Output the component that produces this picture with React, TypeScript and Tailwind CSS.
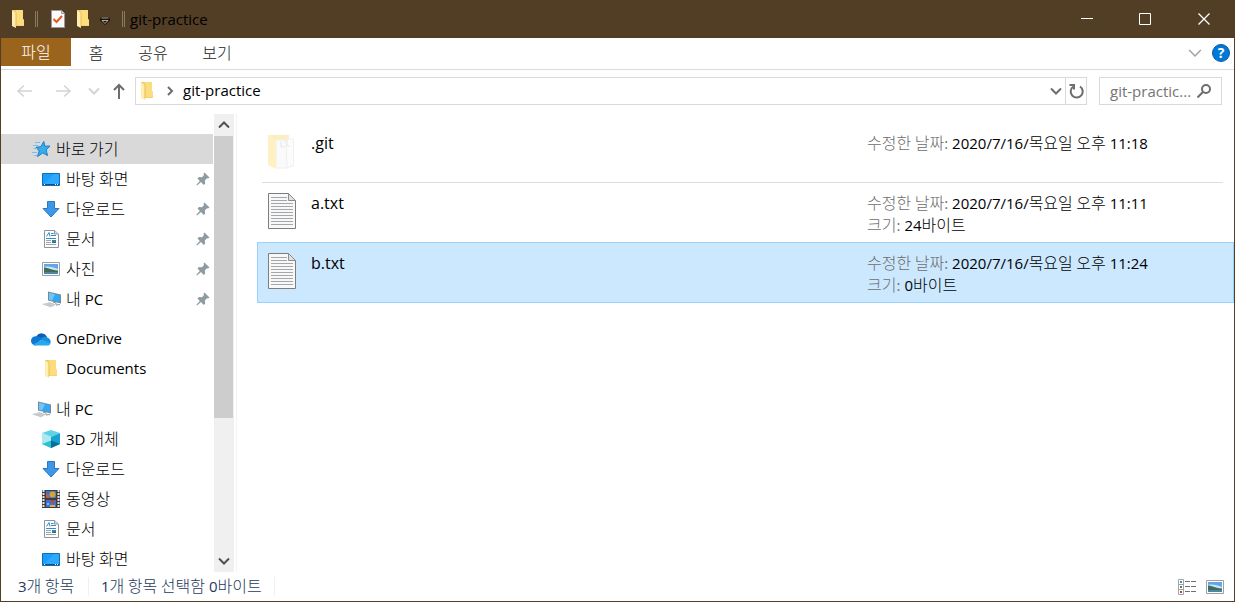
import React from 'react';
import clsx from 'clsx';

type IconProps = { className?: string };

const HANGUL = /([\u3131-\uD79D]+(?: [\u3131-\uD79D]+)*)/;

// Hangul runs are set a step larger than the latin around them
const Txt: React.FC<{ children: string }> = ({ children }) => (
  <>
    {children.split(HANGUL).map((part, i) =>
      i % 2 === 1 ? (
        <span key={i} className="font-['Noto_Sans_CJK_KR',sans-serif] text-[16px] font-light">{part}</span>
      ) : (
        part
      )
    )}
  </>
);

const FolderIcon: React.FC<IconProps> = ({ className = 'w-[14px] h-[18px]' }) => (
  <svg viewBox="0 0 14 18" className={className} aria-hidden="true">
    <path d="M1 0h11v9l1 1v6H3L1 16z" fill="#f2cb62" />
    <path d="M5 0h7v9l1 1V15.500H5z" fill="#fbdc7f" />
    <path d="M1 .5l4 2.500V18L1 16z" fill="#ffeeb0" />
    <path d="M4.500 3L5.500 2.500v13l-1 2z" fill="#e8bd52" />
  </svg>
);

const CheckPageIcon = () => (
  <svg viewBox="0 0 16 18" className="w-4 h-[18px]" aria-hidden="true">
    <path d="M1.500 .5h10L14.500 3.500v14h-13z" fill="#fbfbfb" stroke="#9a9a9a" />
    <path d="M11.500 .5v3h3" fill="#d5dde2" stroke="#9a9a9a" />
    <path d="M3.500 9l3 3L12 6" fill="none" stroke="#e8571c" strokeWidth="2" />
  </svg>
);

const Chevron: React.FC<IconProps & { dir: 'down' | 'up' | 'right'; thick?: number }> = ({ className, dir, thick = 2 }) => {
  const paths = { down: 'M1 3.500l5 5 5-5', up: 'M1 8.500l5-5 5 5', right: 'M4 2l4 4-4 4' };
  return (
    <svg viewBox="0 0 12 12" className={clsx('w-3 h-3', className)} fill="none" stroke="currentColor" strokeWidth={thick} aria-hidden="true">
      <path d={paths[dir]} />
    </svg>
  );
};

const Arrow: React.FC<{ className?: string; d: string }> = ({ className, d }) => (
  <svg viewBox="0 0 16 16" className={clsx('w-4 h-4', className)} fill="none" stroke="currentColor" strokeWidth="1.6" aria-hidden="true">
    <path d={d} />
  </svg>
);

const StarIcon = () => (
  <svg viewBox="0 0 20 18" className="w-5 h-[18px]" aria-hidden="true">
    <path d="M12.800 1.500l1 4.700 5.200-.2-3.800 3.900 1.300 5.600-4.700-2.600-5.300 3.600 1.700-5.600-3.200-3.600 4.800-.6z" fill="#35aef0" stroke="#1b7cc4" />
    <path d="M4 2.500h5M2 5.500h5M2.500 8.500h3M1 12.500h5M3 15.500h3" stroke="#7cbce8" />
  </svg>
);

const DesktopIcon = () => (
  <svg viewBox="0 0 20 18" className="w-5 h-[18px]" aria-hidden="true">
    <path d="M1.500 3.500h17v12h-17z" fill="#1b9dfb" stroke="#0e6fb5" />
    <path d="M2 15L13 4h5v11z" fill="#3fb0ff" opacity=".6" />
    <path d="M2 14.500h16" stroke="#0a4f86" />
    <path d="M3 14.500h1M14 14.500h1M16 14.500h1" stroke="#fff" />
  </svg>
);

const DownloadIcon = () => (
  <svg viewBox="0 0 20 18" className="w-5 h-[18px]" aria-hidden="true">
    <path d="M6.500 1.500h7v7h4.500L10 17 2 8.500h4.500z" fill="#3c98e6" stroke="#2a78c2" />
  </svg>
);

const DocumentIcon = () => (
  <svg viewBox="0 0 20 18" className="w-5 h-[18px]" aria-hidden="true">
    <path d="M3.500 .5h10L17.500 4v13.500h-14z" fill="#fdfdfd" stroke="#8e9396" />
    <path d="M13.500 .5V4H17" fill="#dfe3e5" stroke="#8e9396" />
    <path d="M5.500 6.500l2.500-4 1 4M10 3.500h2.500M10 5.500h5M5 8.500h10" stroke="#2b8fd0" fill="none" />
    <path d="M5 10.500h5M5 12.500h5M5 14.500h10" stroke="#9aa4ab" />
    <path d="M11 10h4v3h-4z" fill="#3d7fb0" />
    <path d="M11 12h4v1h-4z" fill="#3d6b50" />
  </svg>
);

const PictureIcon: React.FC<IconProps> = ({ className = 'w-5 h-[18px]' }) => (
  <svg viewBox="0 0 20 18" className={className} aria-hidden="true">
    <path d="M1.500 2.500h17v13h-17z" fill="#fff" stroke="#9aa0a3" />
    <path d="M3 4h14v10H3z" fill="#63a5e6" />
    <path d="M3 7c4-1 9 0 14 2v2H3z" fill="#cfe5f4" />
    <path d="M3 7.500c4 0 6 2.500 14 3V12H3z" fill="#3f6e58" />
    <path d="M3 12h14v2H3z" fill="#4f86a8" />
  </svg>
);

const PcIcon = () => (
  <svg viewBox="0 0 20 18" className="w-5 h-[18px]" aria-hidden="true">
    <path d="M7 1.500l13 3v9L7 10.500z" fill="#7a8791" />
    <path d="M8 2.800l11 2.500v7L8 9.700z" fill="#32a8f5" />
    <path d="M8 2.800l6 1.400-3 6.200-3-.7z" fill="#6ec4fb" />
    <path d="M12 12l3 1v2l4-.500" fill="none" stroke="#8c98a1" />
    <path d="M1 14l8-2 6 2.500-5 3z" fill="#d4dade" />
    <path d="M2 14.200l8 2.300M4.500 13.500l8 2.300M7 12.800l7 2" stroke="#a9b2b9" strokeWidth=".5" />
  </svg>
);

const CloudIcon = () => (
  <svg viewBox="0 0 20 18" className="w-5 h-[18px]" aria-hidden="true">
    <path d="M5.500 6A6 6 0 0 1 16 7l-5 4-6-3z" fill="#0a5fb4" />
    <path d="M4 15.500A4.700 4.700 0 0 1 5.500 6.200c2-.3 4 .8 5.500 2l-6 7z" fill="#0f78d4" />
    <path d="M10 8.500c2-2 5-2 6.500-1a4.500 4.500 0 0 1 2.800 6L12 12z" fill="#1490df" />
    <path d="M2 14.500l9-5 8.500 4c-.5 1.500-1.800 2-3.500 2H4.500C3.500 15.500 2.700 15.200 2 14.500z" fill="#28a8ea" />
  </svg>
);

const CubeIcon = () => (
  <svg viewBox="0 0 20 18" className="w-5 h-[18px]" aria-hidden="true">
    <path d="M10 0l9 3-9 4-9-4z" fill="#5fd3e3" />
    <path d="M1 3l9 4v11l-9-4z" fill="#aee9f0" />
    <path d="M19 3l-9 4v11l9-4z" fill="#14a3d2" />
    <path d="M1 14l9-3.500V18z" fill="#2fc1cf" />
    <path d="M10 10.500l9 3.500-9 4z" fill="#0a6f93" />
  </svg>
);

const VideoIcon = () => (
  <svg viewBox="0 0 20 18" className="w-5 h-[18px]" aria-hidden="true">
    <path d="M1 0h18v18H1z" fill="#3d3d3d" />
    <path d="M2.500 0v18M17.500 0v18" stroke="#e4e4e4" strokeWidth="2" strokeDasharray="2 1" />
    <path d="M5 1h10v7H5zM5 10h10v7H5z" fill="#3b74d6" />
    <circle cx="11.500" cy="4.500" r="3" fill="#d6a52a" />
    <path d="M5 4l3 1v3H5z" fill="#d2573c" />
    <path d="M9 10h5l-2.500 4z" fill="#c9402d" />
    <path d="M9 15h5v2H9z" fill="#e0b52f" />
    <path d="M6 13h2v2H6z" fill="#8fb8f2" />
  </svg>
);

const PinIcon = () => (
  <svg viewBox="0 0 14 14" className="w-[14px] h-[14px]" aria-hidden="true">
    <path d="M8.500 .5l5 5-1.500 1-1-.2-2.200 2.200.4 3-1.500 1.500-2.700-2.900L1 13.500l-.7-.7L3.800 9 1.500 6.500 3 5l3 .3L8 3l-.5-1.200z" fill="#8f9ba3" />
  </svg>
);

const OpenFolderIcon = () => (
  <svg viewBox="0 0 30 36" className="w-[30px] h-9" aria-hidden="true">
    <path d="M1 2h21v6H9v25z" fill="#fdeec0" />
    <path d="M9 7h7l5 3v25H9z" fill="#fafafa" stroke="#f0f0f0" />
    <path d="M19 6h7.500v27L20 34.500z" fill="#fcfcfc" stroke="#f0f0f0" />
    <path d="M14 8v6h4M20 6v7h3" fill="none" stroke="#e8e8e8" />
    <path d="M1 2l8 5v29l-8-4z" fill="#fff1c4" />
  </svg>
);

const TextFileIcon = () => (
  <svg viewBox="0 0 30 36" className="w-[30px] h-9" aria-hidden="true">
    <path d="M1.500 .5h20l7 7v28h-27z" fill="#f8f8f8" stroke="#7d7d7d" />
    <path d="M21.500 .5v7h7z" fill="#dfe2e4" stroke="#8d8d8d" />
    <path d="M4 4.500h16M4 7.500h16M4 10.500h22M4 13.500h22M4 16.500h22M4 19.500h22M4 22.500h22M4 25.500h22M4 28.500h22M4 31.500h22" stroke="#a3a7aa" />
  </svg>
);

interface NavEntry {
  label: string;
  icon: React.ReactNode;
  root?: boolean;
  pinned?: boolean;
  selected?: boolean;
}

const navGroups: NavEntry[][] = [
  [
    { label: '바로 가기', icon: <StarIcon />, root: true, selected: true },
    { label: '바탕 화면', icon: <DesktopIcon />, pinned: true },
    { label: '다운로드', icon: <DownloadIcon />, pinned: true },
    { label: '문서', icon: <DocumentIcon />, pinned: true },
    { label: '사진', icon: <PictureIcon />, pinned: true },
    { label: '내 PC', icon: <PcIcon />, pinned: true },
  ],
  [
    { label: 'OneDrive', icon: <CloudIcon />, root: true },
    { label: 'Documents', icon: <FolderIcon className="w-5 h-[18px]" /> },
  ],
  [
    { label: '내 PC', icon: <PcIcon />, root: true },
    { label: '3D 개체', icon: <CubeIcon /> },
    { label: '다운로드', icon: <DownloadIcon /> },
    { label: '동영상', icon: <VideoIcon /> },
    { label: '문서', icon: <DocumentIcon /> },
    { label: '바탕 화면', icon: <DesktopIcon /> },
  ],
];

const files = [
  { name: '.git', modified: '2020/7/16/목요일 오후 11:18', size: '', icon: <OpenFolderIcon />, selected: false },
  { name: 'a.txt', modified: '2020/7/16/목요일 오후 11:11', size: '24바이트', icon: <TextFileIcon />, selected: false },
  { name: 'b.txt', modified: '2020/7/16/목요일 오후 11:24', size: '0바이트', icon: <TextFileIcon />, selected: true },
];

const TitleBar = () => (
  <header className="flex h-[38px] shrink-0 items-center bg-[#523d25] pl-2.5 text-black">
    <FolderIcon />
    <span className="ml-2.5 h-4 w-[3px] border-x border-[#8a7a68]" />
    <button aria-label="속성" className="ml-3"><CheckPageIcon /></button>
    <button aria-label="새 폴더" className="ml-2.5"><FolderIcon /></button>
    <button aria-label="빠른 실행 도구 모음" className="ml-2.5 mt-1">
      <svg viewBox="0 0 10 8" className="w-2.5 h-2" aria-hidden="true">
        <path d="M1.500 0h7L10 1.500v2L5 8 0 3.500v-2z" fill="#1a120a" />
        <path d="M1.500 1h7M2 3.500h6L5 6.500z" stroke="#d8d0c6" strokeWidth=".8" fill="#1a120a" />
      </svg>
    </button>
    <span className="ml-3 h-4 w-[3px] border-x border-[#8a7a68]" />
    <h1 className="ml-[5px]">git-practice</h1>
    <div className="ml-auto flex h-full text-white">
      <button aria-label="최소화" className="flex w-[58px] items-center justify-center">
        <svg viewBox="0 0 12 12" className="w-3 h-3" stroke="currentColor" aria-hidden="true"><path d="M0 5.500h12" /></svg>
      </button>
      <button aria-label="최대화" className="flex w-[58px] items-center justify-center">
        <svg viewBox="0 0 12 12" className="w-3 h-3" fill="none" stroke="currentColor" aria-hidden="true"><path d="M.5 .5h11v11H.5z" /></svg>
      </button>
      <button aria-label="닫기" className="flex w-[60px] items-center justify-center">
        <svg viewBox="0 0 12 12" className="w-3 h-3" stroke="currentColor" strokeWidth="1.3" aria-hidden="true"><path d="M.5 .5l11 11M11.500 .5l-11 11" /></svg>
      </button>
    </div>
  </header>
);

const Ribbon = () => (
  <div className="flex h-8 shrink-0 items-start border-b border-[#dadbdc] text-[#222]">
    <button className="h-7 w-[70px] bg-[#9b641c] pb-0.5 text-white"><Txt>파일</Txt></button>
    <button className="h-7 w-[50px]"><Txt>홈</Txt></button>
    <button className="h-7 w-16"><Txt>공유</Txt></button>
    <button className="h-7 w-16"><Txt>보기</Txt></button>
    <div className="ml-auto flex h-[30px] items-center gap-2.5 pr-1">
      <button aria-label="리본 확장" className="text-[#a0a0a0]"><Chevron dir="down" thick={1.2} className="w-3.5 h-3.5" /></button>
      <button aria-label="도움말" className="h-[18px] w-[18px] rounded-full border border-[#0b5cad] bg-[#0078d7] text-[14px] leading-4 font-bold text-white">?</button>
    </div>
  </div>
);

const AddressBar = () => (
  <div className="flex h-11 shrink-0 items-center pt-[7px] pb-[9px] pr-3">
    <div className="flex w-[134px] items-center pl-[15px] text-[#d4d4d4]">
      <button aria-label="뒤로"><Arrow d="M16 8H2M8 2.500L2 8l6 5.500" /></button>
      <button aria-label="앞으로" className="ml-6"><Arrow d="M0 8h14M8 2.500L14 8l-6 5.500" /></button>
      <button aria-label="최근 위치" className="ml-4"><Chevron dir="down" className="w-2.5 h-2.5" /></button>
      <button aria-label="위로" className="ml-[11px] text-[#6d6d6d]">
        <svg viewBox="0 0 16 16" className="w-4 h-4" fill="none" stroke="currentColor" strokeWidth="2" aria-hidden="true">
          <path d="M8 16V2M3 7l5-5 5 5" />
        </svg>
      </button>
    </div>
    <nav aria-label="주소" className="flex h-7 grow items-center border border-[#d9d9d9]">
      <span className="ml-1"><FolderIcon /></span>
      <Chevron dir="right" className="ml-2.5 text-[#6d6d6d]" />
      <a href="#git-practice" className="ml-[7px] pb-0.5 text-black">git-practice</a>
      <button aria-label="이전 위치" className="ml-auto mr-[3px] text-[#6d6d6d]"><Chevron dir="down" /></button>
      <button aria-label="새로 고침" className="flex h-full w-[21px] items-center justify-center border-l border-[#d9d9d9] text-[#6d6d6d]">
        <svg viewBox="0 0 16 16" className="w-4 h-4" fill="none" stroke="currentColor" strokeWidth="2" aria-hidden="true">
          <path d="M12 3.500A6 6 0 1 1 5 3.800M1.500 2H6v4.500" />
        </svg>
      </button>
    </nav>
    <label className="ml-3 flex h-7 w-[123px] items-center border border-[#d9d9d9] pl-2.5 pr-2.5 text-[#6d6d6d]">
      <input type="text" aria-label="git-practice 검색" placeholder="git-practic..." className="w-[87px] shrink-0 outline-none placeholder:text-[#757575]" />
      <svg viewBox="0 0 14 14" className="w-3.5 h-3.5 shrink-0" fill="none" stroke="currentColor" strokeWidth="2" aria-hidden="true">
        <circle cx="9" cy="5" r="4" />
        <path d="M6 8l-5.500 5.500" />
      </svg>
    </label>
  </div>
);

const Sidebar = () => (
  <aside className="flex w-[236px] shrink-0 border-r border-[#f3f3f3] pr-0.5 text-black">
    <nav className="flex w-[213px] flex-col gap-2.5 overflow-hidden pt-5">
      {navGroups.map((group, g) => (
        <ul key={g}>
          {group.map((entry) => (
            <li key={entry.label}>
              <a
                href="#"
                className={clsx(
                  'mr-px flex h-[30px] items-center gap-[5px] pr-[3px]',
                  entry.root ? 'pl-[30px]' : 'pl-10',
                  entry.selected && 'bg-[#d9d9d9]'
                )}
              >
                {entry.icon}
                <span className="grow pb-0.5"><Txt>{entry.label}</Txt></span>
                {entry.pinned && <PinIcon />}
              </a>
            </li>
          ))}
        </ul>
      ))}
    </nav>
    <div className="flex w-5 flex-col bg-[#f0f0f0] text-[#505050]">
      <button aria-label="위로 스크롤" className="flex h-[22px] shrink-0 items-center justify-center"><Chevron dir="up" /></button>
      <div className="min-h-0 grow"><div className="mr-px h-[68%] bg-[#cdcdcd]" /></div>
      <button aria-label="아래로 스크롤" className="flex h-[22px] shrink-0 items-center justify-center"><Chevron dir="down" /></button>
    </div>
  </aside>
);

const FileList = () => (
  <main className="grow overflow-hidden pl-5 pt-[9px]">
    <ul>
      {files.map((file) => (
        <li key={file.name} className={clsx(file.selected ? '-mt-px border border-[#99d1ff] bg-[#cce8ff] pl-1' : 'pl-[5px] pr-[11px]')}>
          <div className={clsx('flex items-start', file.selected ? 'h-[59px]' : 'h-[60px] border-b border-[#dedede]')}>
            <span className="ml-[5px] mt-2.5 shrink-0">{file.icon}</span>
            <span className="ml-3.5 mt-[9px] grow text-[16px] leading-[22px] text-black">{file.name}</span>
            <dl className={clsx('mt-2 shrink-0 leading-[22px]', file.selected ? 'w-[366px]' : 'w-[356px]')}>
              <div className="flex h-[22px] gap-1">
                <dt className="text-[#6d6d6d]"><Txt>수정한 날짜:</Txt></dt>
                <dd className="text-black"><Txt>{file.modified}</Txt></dd>
              </div>
              {file.size && (
                <div className="flex h-[22px] gap-1">
                  <dt className="text-[#6d6d6d]"><Txt>크기:</Txt></dt>
                  <dd className="text-black"><Txt>{file.size}</Txt></dd>
                </div>
              )}
            </dl>
          </div>
        </li>
      ))}
    </ul>
  </main>
);

const StatusBar = () => (
  <footer className="flex h-[29px] shrink-0 items-center pl-[17px] pr-[9px] text-[#1e395b]">
    <span className="w-[71px] border-r border-[#f0f0f0] pb-0.5 leading-4"><Txt>3개 항목</Txt></span>
    <span className="ml-3 border-r border-[#f0f0f0] pr-3 pb-0.5 leading-4"><Txt>1개 항목 선택함 0바이트</Txt></span>
    <div className="ml-auto flex items-center gap-2">
      <button aria-label="자세히">
        <svg viewBox="0 0 20 18" className="w-5 h-[18px]" fill="none" aria-hidden="true">
          <path d="M1.500 1.500h5v15h-5zM1.500 6.500h5M1.500 11.500h5" stroke="#a0a5a8" />
          <path d="M3 4h2" stroke="#3d8ac4" strokeWidth="2" />
          <path d="M3 9h2" stroke="#5f7d3d" strokeWidth="2" />
          <path d="M3 14h2" stroke="#c8401f" strokeWidth="2" />
          <path d="M8 3.500h5M14 3.500h5M8 8.500h5M14 8.500h5M8 13.500h5M14 13.500h5" stroke="#707070" />
        </svg>
      </button>
      <button aria-label="큰 아이콘"><PictureIcon /></button>
    </div>
  </footer>
);

export default function App() {
  return (
    <div className="flex h-screen flex-col overflow-hidden border border-t-0 border-[#523d25] bg-white font-['Open_Sans','Noto_Sans_CJK_KR',sans-serif] text-[15px]">
      <TitleBar />
      <Ribbon />
      <AddressBar />
      <div className="flex min-h-0 grow">
        <Sidebar />
        <FileList />
      </div>
      <StatusBar />
    </div>
  );
}
